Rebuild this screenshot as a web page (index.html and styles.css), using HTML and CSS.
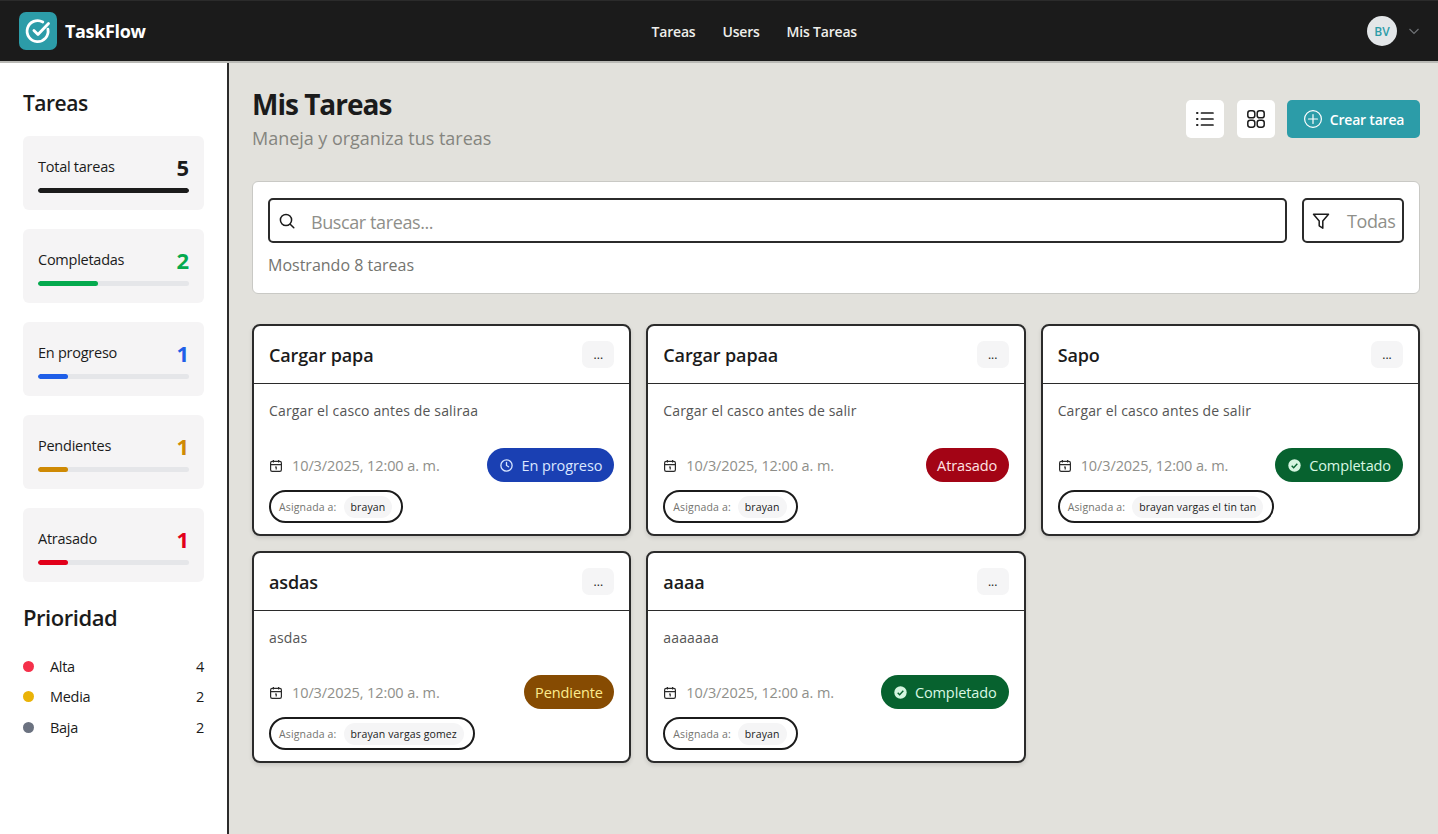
FILE: index.html
```html
<!DOCTYPE html>
<html lang="es">
<head>
<meta charset="utf-8">
<title>TaskFlow</title>
<link rel="stylesheet" href="styles.css">
</head>
<body>
<header class="topbar">
  <div class="brand">
    <span class="logo"><svg viewBox="0 0 24 24" width="28" height="28" fill="none" stroke="#fff" stroke-width="2.4" stroke-linecap="round" stroke-linejoin="round"><path d="M20.5 10.5a9 9 0 1 1-4.4-6.2"/><path d="M8.5 11.5l3.5 3.5 9-9.5"/></svg></span>
    <span class="brand-name">TaskFlow</span>
  </div>
  <nav class="nav"><a>Tareas</a><a>Users</a><a>Mis Tareas</a></nav>
  <div class="user">
    <span class="avatar">BV</span>
    <svg class="chev" viewBox="0 0 12 12" width="12" height="12" fill="none" stroke="#6f7276" stroke-width="1.2"><path d="M1.5 4l4.5 4.5L10.5 4"/></svg>
  </div>
</header>
<div class="shell">
  <aside class="sidebar">
    <h2 class="side-title">Tareas</h2>
    <div class="stats">
      <div class="stat"><div class="stat-row"><span>Total tareas</span><b class="c-dark">5</b></div><div class="track"><div class="fill f-dark" style="width:100%"></div></div></div>
      <div class="stat"><div class="stat-row"><span>Completadas</span><b class="c-green">2</b></div><div class="track"><div class="fill f-green" style="width:40%"></div></div></div>
      <div class="stat"><div class="stat-row"><span>En progreso</span><b class="c-blue">1</b></div><div class="track"><div class="fill f-blue" style="width:20%"></div></div></div>
      <div class="stat"><div class="stat-row"><span>Pendientes</span><b class="c-amber">1</b></div><div class="track"><div class="fill f-amber" style="width:20%"></div></div></div>
      <div class="stat"><div class="stat-row"><span>Atrasado</span><b class="c-red">1</b></div><div class="track"><div class="fill f-red" style="width:20%"></div></div></div>
    </div>
    <h2 class="side-title prio-title">Prioridad</h2>
    <ul class="prio">
      <li><i class="dot d-red"></i><span>Alta</span><b>4</b></li>
      <li><i class="dot d-yellow"></i><span>Media</span><b>2</b></li>
      <li><i class="dot d-gray"></i><span>Baja</span><b>2</b></li>
    </ul>
  </aside>
  <main class="main">
    <div class="page-head">
      <div>
        <h1>Mis Tareas</h1>
        <p class="sub">Maneja y organiza tus tareas</p>
      </div>
      <div class="actions">
        <button class="icon-btn"><svg viewBox="0 0 24 24" width="24" height="24" fill="none" stroke="#1b1b1b" stroke-width="1.7" stroke-linecap="round"><path d="M8.5 6H20M8.5 12H20M8.5 18H20"/><path d="M4 6h.5M4 12h.5M4 18h.5" stroke-width="2"/></svg></button>
        <button class="icon-btn"><svg viewBox="0 0 24 24" width="24" height="24" fill="none" stroke="#1b1b1b" stroke-width="1.5"><rect x="3.8" y="3.8" width="7" height="7" rx="2.4"/><rect x="13.2" y="3.8" width="7" height="7" rx="2.4"/><rect x="3.8" y="13.2" width="7" height="7" rx="2.4"/><rect x="13.2" y="13.2" width="7" height="7" rx="2.4"/></svg></button>
        <button class="create"><svg viewBox="0 0 20 20" width="20" height="20" fill="none" stroke="#fff" stroke-width="1.2" stroke-linecap="round"><circle cx="10" cy="10" r="8.4"/><path d="M10 5.5v9M5.5 10h9"/></svg><span>Crear tarea</span></button>
      </div>
    </div>
    <section class="filters">
      <div class="filter-row">
        <div class="search">
          <svg viewBox="0 0 20 20" width="20" height="20" fill="none" stroke="#1b1b1b" stroke-width="1.5" stroke-linecap="round"><circle cx="9" cy="9" r="5.6"/><path d="M13.2 13.2l3.6 3.6"/></svg>
          <span>Buscar tareas...</span>
        </div>
        <div class="select">
          <svg viewBox="0 0 20 20" width="20" height="20" fill="none" stroke="#1b1b1b" stroke-width="1.5" stroke-linejoin="round"><path d="M2.5 3.2h15l-5.7 6.8v7.2l-3.6-2.4V10z"/></svg>
          <span>Todas</span>
        </div>
      </div>
      <p class="count">Mostrando 8 tareas</p>
    </section>
    <section class="grid">
      <article class="card">
        <div class="card-head"><h3>Cargar papa</h3><button class="more">...</button></div>
        <div class="card-body">
          <p class="desc">Cargar el casco antes de saliraa</p>
          <div class="meta">
            <span class="date"><svg class="cal" viewBox="0 0 14 14" width="14" height="14" fill="none" stroke="#2a2a2a" stroke-width="1.2"><rect x="1.6" y="2.4" width="10.8" height="10" rx="1.6"/><path d="M1.6 5.6h10.8M4.4 1v2.4M9.6 1v2.4M6 8h1.2v2.6"/></svg>10/3/2025, 12:00 a. m.</span>
            <span class="badge b-blue"><svg viewBox="0 0 16 16" width="15" height="15" fill="none" stroke="#d6e4ff" stroke-width="1.4" stroke-linecap="round"><circle cx="8" cy="8" r="6"/><path d="M8 4.6V8l2.2 1.4"/></svg>En progreso</span>
          </div>
          <div class="assign"><span class="as-label">Asignada a:</span><span class="as-name">brayan</span></div>
        </div>
      </article>
      <article class="card">
        <div class="card-head"><h3>Cargar papaa</h3><button class="more">...</button></div>
        <div class="card-body">
          <p class="desc">Cargar el casco antes de salir</p>
          <div class="meta">
            <span class="date"><svg class="cal" viewBox="0 0 14 14" width="14" height="14" fill="none" stroke="#2a2a2a" stroke-width="1.2"><rect x="1.6" y="2.4" width="10.8" height="10" rx="1.6"/><path d="M1.6 5.6h10.8M4.4 1v2.4M9.6 1v2.4M6 8h1.2v2.6"/></svg>10/3/2025, 12:00 a. m.</span>
            <span class="badge b-red">Atrasado</span>
          </div>
          <div class="assign"><span class="as-label">Asignada a:</span><span class="as-name">brayan</span></div>
        </div>
      </article>
      <article class="card">
        <div class="card-head"><h3>Sapo</h3><button class="more">...</button></div>
        <div class="card-body">
          <p class="desc">Cargar el casco antes de salir</p>
          <div class="meta">
            <span class="date"><svg class="cal" viewBox="0 0 14 14" width="14" height="14" fill="none" stroke="#2a2a2a" stroke-width="1.2"><rect x="1.6" y="2.4" width="10.8" height="10" rx="1.6"/><path d="M1.6 5.6h10.8M4.4 1v2.4M9.6 1v2.4M6 8h1.2v2.6"/></svg>10/3/2025, 12:00 a. m.</span>
            <span class="badge b-green"><svg viewBox="0 0 16 16" width="15" height="15"><circle cx="8" cy="8" r="6.6" fill="#d5f5e0"/><path d="M5 8.2l2.1 2.1L11 6.2" fill="none" stroke="#07622f" stroke-width="1.5"/></svg>Completado</span>
          </div>
          <div class="assign"><span class="as-label">Asignada a:</span><span class="as-name">brayan vargas el tin tan</span></div>
        </div>
      </article>
      <article class="card">
        <div class="card-head"><h3>asdas</h3><button class="more">...</button></div>
        <div class="card-body">
          <p class="desc">asdas</p>
          <div class="meta">
            <span class="date"><svg class="cal" viewBox="0 0 14 14" width="14" height="14" fill="none" stroke="#2a2a2a" stroke-width="1.2"><rect x="1.6" y="2.4" width="10.8" height="10" rx="1.6"/><path d="M1.6 5.6h10.8M4.4 1v2.4M9.6 1v2.4M6 8h1.2v2.6"/></svg>10/3/2025, 12:00 a. m.</span>
            <span class="badge b-amber">Pendiente</span>
          </div>
          <div class="assign"><span class="as-label">Asignada a:</span><span class="as-name">brayan vargas gomez</span></div>
        </div>
      </article>
      <article class="card">
        <div class="card-head"><h3>aaaa</h3><button class="more">...</button></div>
        <div class="card-body">
          <p class="desc">aaaaaaa</p>
          <div class="meta">
            <span class="date"><svg class="cal" viewBox="0 0 14 14" width="14" height="14" fill="none" stroke="#2a2a2a" stroke-width="1.2"><rect x="1.6" y="2.4" width="10.8" height="10" rx="1.6"/><path d="M1.6 5.6h10.8M4.4 1v2.4M9.6 1v2.4M6 8h1.2v2.6"/></svg>10/3/2025, 12:00 a. m.</span>
            <span class="badge b-green"><svg viewBox="0 0 16 16" width="15" height="15"><circle cx="8" cy="8" r="6.6" fill="#d5f5e0"/><path d="M5 8.2l2.1 2.1L11 6.2" fill="none" stroke="#07622f" stroke-width="1.5"/></svg>Completado</span>
          </div>
          <div class="assign"><span class="as-label">Asignada a:</span><span class="as-name">brayan</span></div>
        </div>
      </article>
    </section>
  </main>
</div>
</body>
</html>
```
FILE: styles.css
```css
* { box-sizing: border-box; }
html, body { margin: 0; height: 100%; }
body {
  font-family: "Open Sans", "Noto Sans", sans-serif;
  color: #1b1b1b;
  background: #e2e1dc;
  overflow: hidden;
}
.topbar {
  height: 63px;
  background: #1b1b1b;
  border-top: 1px solid #2b2b2b;
  border-bottom: 2px solid #b9b9b5;
  display: flex;
  justify-content: space-between;
  align-items: center;
  padding: 0 18px 0 19px;
}
.brand { display: flex; align-items: center; gap: 8px; }
.logo {
  width: 38px; height: 38px;
  border-radius: 7px;
  background: #2c9ca8;
  display: flex; align-items: center; justify-content: center;
}
.brand-name { color: #fff; font-size: 18px; font-weight: 700; letter-spacing: -0.35px; }
.nav { display: flex; gap: 27px; margin-right: 4px; }
.nav a { color: #eeeeea; font-size: 14px; font-weight: 600; letter-spacing: -0.2px; }
.user { display: flex; align-items: center; gap: 11px; }
.avatar {
  width: 30px; height: 30px; border-radius: 50%;
  background: #e3e6e8; color: #2c9ca8;
  font-size: 12px; font-weight: 600;
  display: flex; align-items: center; justify-content: center;
}
.shell { display: flex; height: 771px; }
.sidebar {
  width: 229px;
  flex: none;
  background: #fff;
  border-right: 2px solid #2b2b2b;
  padding: 26px 23px 0;
}
.side-title { margin: 0; font-size: 21px; line-height: 29px; font-weight: 600; letter-spacing: -0.5px; }
.stats { margin-top: 18px; display: flex; flex-direction: column; gap: 19px; }
.stat {
  height: 74px;
  background: #f5f4f5;
  border-radius: 6px;
  padding: 17px 15px 0;
}
.stat-row { display: flex; justify-content: space-between; align-items: center; height: 27px; font-size: 14.5px; letter-spacing: -0.25px; }
.stat-row b { font-size: 22px; font-weight: 700; letter-spacing: 0; }
.track { height: 5px; background: #e5e6e9; border-radius: 3px; margin-top: 8px; overflow: hidden; }
.fill { height: 100%; border-radius: 3px; }
.f-dark { background: #1b1b1b; } .c-dark { color: #1b1b1b; }
.f-green { background: #04aa4e; } .c-green { color: #04aa4e; }
.f-blue { background: #1f5fe8; } .c-blue { color: #1f5fe8; }
.f-amber { background: #cf8a04; } .c-amber { color: #cf8a04; }
.f-red { background: #e2001a; } .c-red { color: #e2001a; }
.prio-title { margin-top: 21px; font-size: 22px; letter-spacing: -0.45px; }
.prio { list-style: none; margin: 19px 0 0; padding: 0; }
.prio li { display: flex; align-items: center; height: 30.5px; font-size: 14.5px; letter-spacing: -0.3px; }
.prio span { flex: 1; }
.prio b { font-weight: 400; }
.dot { width: 11px; height: 11px; border-radius: 50%; margin-right: 16px; }
.d-red { background: #f5304a; } .d-yellow { background: #eab308; } .d-gray { background: #6b7280; }
.main { flex: 1; padding: 23px 18px 0 23px; }
.page-head { display: flex; justify-content: space-between; align-items: flex-start; }
h1 { margin: 0; font-size: 28px; line-height: 36px; font-weight: 700; letter-spacing: -1px; }
.sub { margin: 3px 0 0; font-size: 18px; line-height: 26px; color: #85857f; letter-spacing: -0.03px; }
.actions { display: flex; gap: 12.5px; margin-top: 14px; }
.icon-btn {
  width: 38px; height: 38px; border: 0; border-radius: 5px; background: #fff; padding: 0;
  display: flex; align-items: center; justify-content: center;
}
.create {
  height: 38px; width: 133px; border: 0; border-radius: 5px; background: #2c9ca8; color: #fff;
  font: 600 14px "Open Sans", sans-serif; letter-spacing: -0.2px;
  display: flex; align-items: center; justify-content: center; gap: 7px; padding: 0;
}
.filters {
  margin-top: 30px;
  height: 113px;
  background: #fff;
  border: 1px solid #c9c9c5;
  border-radius: 6px;
  padding: 16px 15px 0;
}
.filter-row { display: flex; gap: 15px; }
.search, .select {
  height: 45px;
  border: 2px solid #2b2b2b;
  border-radius: 5px;
  display: flex; align-items: center;
  font-size: 18px; color: #8f8f8a; letter-spacing: -0.4px;
}
.search { flex: 1; padding-left: 7px; gap: 14px; }
.search span { padding-top: 2px; }
.select { width: 102px; padding-left: 7px; gap: 16px; }
.count { margin: 11px 0 0; font-size: 16px; color: #74746f; letter-spacing: 0; }
.grid {
  margin-top: 30px;
  display: grid;
  grid-template-columns: repeat(3, 1fr);
  gap: 15px;
}
.card {
  height: 212px;
  background: #fff;
  border: 2px solid #2b2b2b;
  border-radius: 8px;
  box-shadow: 0 2px 4px rgba(0,0,0,.12);
}
.card-head {
  height: 58px;
  border-bottom: 1px solid #2b2b2b;
  display: flex; align-items: center; justify-content: space-between;
  padding: 0 15px;
}
.card-head h3 { margin: 0; font-size: 18px; font-weight: 600; letter-spacing: -0.12px; }
.more {
  width: 32px; height: 27px; border: 0; border-radius: 7px; background: #f5f5f6;
  color: #1b1b1b; font: 400 12px "Open Sans", sans-serif; padding: 0;
}
.card-body { padding: 15px 15px 0; }
.desc { margin: 0; height: 24px; font-size: 14px; line-height: 24px; color: #555; letter-spacing: 0.15px; }
.meta { display: flex; justify-content: space-between; align-items: center; margin-top: 25px; }
.date { display: flex; align-items: center; gap: 9px; font-size: 14.5px; color: #8f8f8a; letter-spacing: -0.1px; }
.cal { margin-top: 1px; }
.badge {
  height: 34px; border-radius: 17px; padding: 0 12px;
  display: flex; align-items: center; gap: 7px; font-size: 14.5px; letter-spacing: -0.1px;
}
.b-blue { background: #1a40b3; color: #dbe7ff; gap: 8px; }
.b-red { background: #a30415; color: #ffe3e3; padding: 0 11.5px; }
.b-green { background: #07622f; color: #d9f8e4; }
.b-amber { background: #864b02; color: #fdeb8e; padding: 0 11.5px; }
.assign {
  display: inline-flex; align-items: center; gap: 7px;
  height: 33px; margin-top: 8px;
  border: 2px solid #1b1b1b; border-radius: 17px;
  padding: 0 9px 0 8px;
}
.as-label { font-size: 10.5px; color: #74746f; letter-spacing: .15px; }
.as-name { font-size: 10.5px; height: 22px; line-height: 22px; background: #f5f5f6; border-radius: 11px; padding: 0 7px; color: #1b1b1b; letter-spacing: .12px; }
```
